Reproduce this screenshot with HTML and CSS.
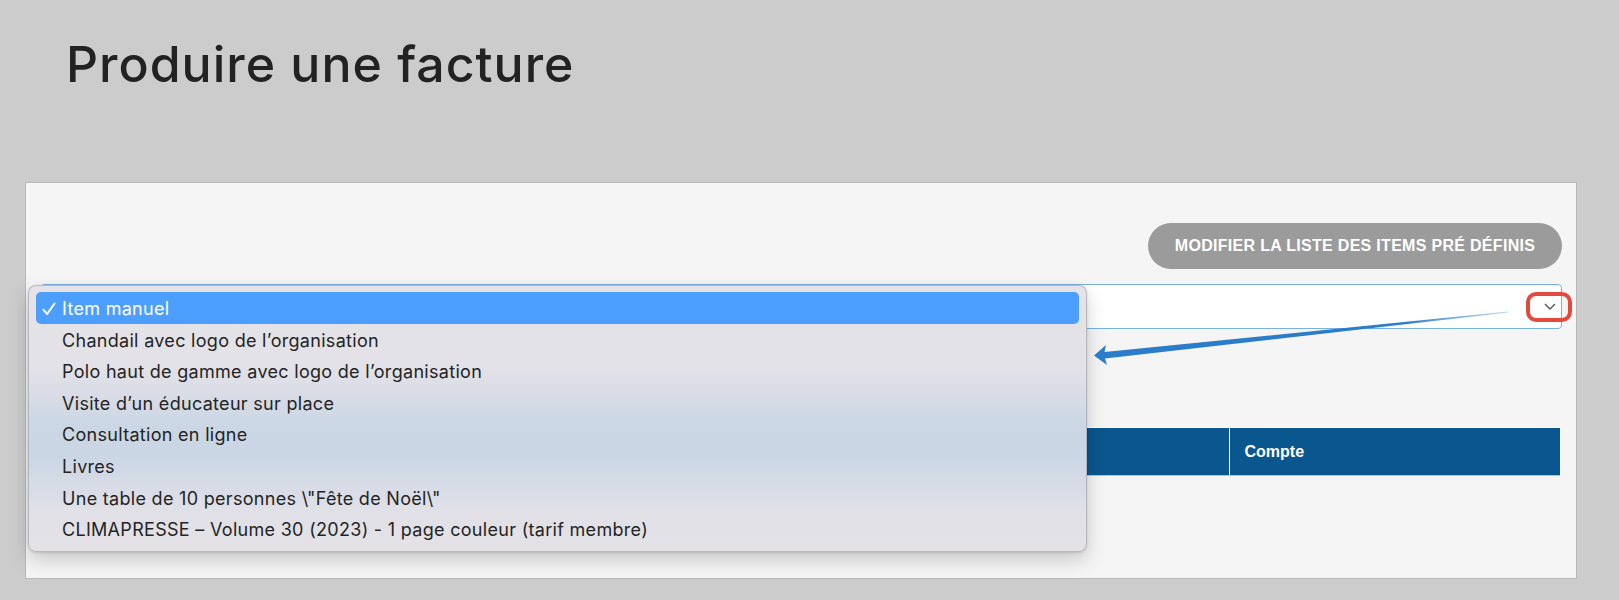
FILE: index.html
```html
<!DOCTYPE html>
<html lang="fr">
<head>
<meta charset="utf-8">
<title>Produire une facture</title>
<link rel="stylesheet" href="styles.css">
</head>
<body>
<header class="page-head">
  <h1 class="page-title">Produire une facture</h1>
</header>
<main class="panel">
  <div class="toolbar">
    <button class="btn-pill" type="button">MODIFIER LA LISTE DES ITEMS PRÉ DÉFINIS</button>
  </div>
  <div class="select">
    <span class="select-value"></span>
    <svg class="chev" width="12" height="7" viewBox="0 0 12 7"><path d="M1 1 L6 6 L11 1" fill="none" stroke="#555" stroke-width="1.4"/></svg>
  </div>
  <table class="items">
    <thead>
      <tr><th class="col-main"></th><th class="col-account">Compte</th></tr>
    </thead>
  </table>
</main>

<div class="popup">
  <ul class="popup-list">
    <li class="opt selected"><svg class="check" width="14" height="14" viewBox="0 0 14 14"><path d="M1.5 7.8 L5.2 12 L12.5 1.5" fill="none" stroke="#ffffff" stroke-width="2" stroke-linecap="round" stroke-linejoin="round"/></svg>Item manuel</li>
    <li class="opt">Chandail avec logo de l’organisation</li>
    <li class="opt">Polo haut de gamme avec logo de l’organisation</li>
    <li class="opt">Visite d’un éducateur sur place</li>
    <li class="opt">Consultation en ligne</li>
    <li class="opt">Livres</li>
    <li class="opt">Une table de 10 personnes \"Fête de Noël\"</li>
    <li class="opt">CLIMAPRESSE – Volume 30 (2023) - 1 page couleur (tarif membre)</li>
  </ul>
</div>

<svg class="annot-arrow" width="1619" height="600" viewBox="0 0 1619 600">
  <defs>
    <linearGradient id="fade" x1="1094" y1="0" x2="1510" y2="0" gradientUnits="userSpaceOnUse">
      <stop offset="0" stop-color="#2b7ccb"/>
      <stop offset="0.75" stop-color="#2b7ccb"/>
      <stop offset="1" stop-color="#8dbde8" stop-opacity="0.6"/>
    </linearGradient>
  </defs>
  <polygon fill="url(#fade)" points="1094,355.5 1106,345 1104.5,352 1508,311.6 1508,312.4 1105,358.5 1107,365"/>
</svg>
<div class="annot-box"></div>
</body>
</html>
```
FILE: styles.css
```css
html, body {
  margin: 0;
  padding: 0;
}
body {
  background: #cccccc;
  width: 1619px;
  height: 600px;
  overflow: hidden;
  position: relative;
  font-family: "Liberation Sans", Arial, sans-serif;
}

.page-head {
  height: 182px;
  box-sizing: border-box;
  padding: 34px 0 0 66px;
}
.page-title {
  margin: 0;
  font-family: Inter, "Noto Sans", sans-serif;
  font-weight: 500;
  font-size: 50px;
  line-height: 60px;
  color: #222222;
  letter-spacing: 1px;
}

.panel {
  margin-left: 25px;
  width: 1552px;
  height: 397px;
  box-sizing: border-box;
  background: #f5f5f5;
  border: 1px solid #b8b8b8;
  padding: 40px 14px 0 14px;
}

.toolbar {
  display: flex;
  justify-content: flex-end;
}
.btn-pill {
  width: 414px;
  height: 46px;
  border: 0;
  border-radius: 23px;
  background: #9b9b9b;
  color: #ffffff;
  font-family: "Liberation Sans", Arial, sans-serif;
  font-weight: bold;
  font-size: 16px;
  letter-spacing: 0.3px;
  padding: 0;
}

.select {
  margin-top: 15px;
  height: 45px;
  box-sizing: border-box;
  background: #ffffff;
  border: 1px solid #78b1e6;
  border-radius: 4px;
  display: flex;
  align-items: center;
  justify-content: flex-end;
  padding-right: 5px;
}
.chev {
  display: block;
}

.items {
  margin-top: 98px;
  width: 1520px;
  border-collapse: collapse;
}
.items th {
  height: 48px;
  box-sizing: border-box;
  background: #0a568e;
  color: #ffffff;
  text-align: left;
  font-size: 16px;
  font-weight: bold;
  border-top: 1px solid #ffffff;
  border-bottom: 1px solid #a9c4de;
  padding: 0 0 0 15px;
}
.items .col-main {
  width: 1189px;
  border-right: 1px solid #ffffff;
}

.popup {
  position: absolute;
  left: 28px;
  top: 285px;
  width: 1059px;
  height: 267px;
  box-sizing: border-box;
  border-radius: 8px;
  border: 1px solid rgba(150, 150, 160, 0.55);
  background: linear-gradient(180deg,
    #e5e3e8 0%,
    #e3e2e8 30%,
    #d8dce6 42%,
    #cbd7e5 52%,
    #cad6e5 64%,
    #d6dbe6 74%,
    #e0e0e7 84%,
    #e4e2e7 100%);
  box-shadow: 0 8px 20px rgba(0, 0, 0, 0.18), 0 1px 3px rgba(0, 0, 0, 0.12);
  padding: 6px 7px 0 7px;
}
.popup-list {
  list-style: none;
  margin: 0;
  padding: 0;
}
.opt {
  height: 31.6px;
  line-height: 33px;
  box-sizing: border-box;
  padding-left: 26px;
  font-family: Inter, "Noto Sans", sans-serif;
  font-size: 18px;
  letter-spacing: 0.3px;
  color: #242424;
  position: relative;
  white-space: nowrap;
}
.opt.selected {
  background: #4c9ffe;
  color: #ffffff;
  border-radius: 5px;
}
.check {
  position: absolute;
  left: 6px;
  top: 10px;
}

.annot-arrow {
  position: absolute;
  left: 0;
  top: 0;
  pointer-events: none;
}
.annot-box {
  position: absolute;
  left: 1526px;
  top: 292px;
  width: 46px;
  height: 30px;
  box-sizing: border-box;
  border: 4px solid #e24b3b;
  border-radius: 10px;
}
```
